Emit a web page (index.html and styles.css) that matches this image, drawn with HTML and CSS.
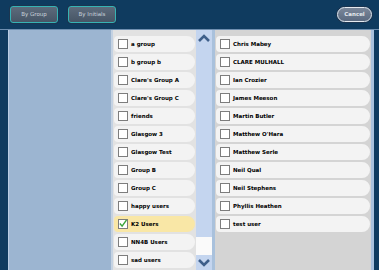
FILE: index.html
```html
<!doctype html>
<html>
<head>
<meta charset="UTF-8">
<title>Groups</title>
<link rel="stylesheet" href="styles.css">
</head>
<body>
  <div class="app">
    <div class="topbar">
      <a class="tab-button" href="#">By Group</a>
      <a class="tab-button" href="#">By Initials</a>
      <a class="cancel-button" href="#">Cancel</a>
    </div>
    <div class="main">
      <div class="side"></div>
      <div class="group-panel">
        <ul class="list">
          <li class="row"><span class="box"></span>a group</li>
          <li class="row"><span class="box"></span>b group b</li>
          <li class="row"><span class="box"></span>Clare's Group A</li>
          <li class="row"><span class="box"></span>Clare's Group C</li>
          <li class="row"><span class="box"></span>friends</li>
          <li class="row"><span class="box"></span>Glasgow 3</li>
          <li class="row"><span class="box"></span>Glasgow Test</li>
          <li class="row"><span class="box"></span>Group B</li>
          <li class="row"><span class="box"></span>Group C</li>
          <li class="row"><span class="box"></span>happy users</li>
          <li class="row selected"><span class="box checked">
            <svg width="9" height="9" viewBox="0 0 9 9"><path d="M1 4.5 L3.5 7.5 L8.5 0.5" fill="none" stroke="#3aa53a" stroke-width="1.6"/></svg>
          </span>K2 Users</li>
          <li class="row"><span class="box"></span>NN4B Users</li>
          <li class="row"><span class="box"></span>sad users</li>
        </ul>
        <div class="scroller">
          <svg class="arrow" width="14" height="9" viewBox="0 0 14 9"><path d="M2 7 L7 2 L12 7" fill="none" stroke="#3e5f8a" stroke-width="2.6"/></svg>
          <div class="track"></div>
          <div class="track-end"></div>
          <svg class="arrow" width="14" height="9" viewBox="0 0 14 9"><path d="M2 2 L7 7 L12 2" fill="none" stroke="#3e5f8a" stroke-width="2.6"/></svg>
        </div>
      </div>
      <div class="user-panel">
        <ul class="list">
          <li class="row"><span class="box"></span>Chris Mabey</li>
          <li class="row"><span class="box"></span>CLARE MULHALL</li>
          <li class="row"><span class="box"></span>Ian Crozier</li>
          <li class="row"><span class="box"></span>James Meeson</li>
          <li class="row"><span class="box"></span>Martin Butler</li>
          <li class="row"><span class="box"></span>Matthew O'Hara</li>
          <li class="row"><span class="box"></span>Matthew Serle</li>
          <li class="row"><span class="box"></span>Neil Qual</li>
          <li class="row"><span class="box"></span>Neil Stephens</li>
          <li class="row"><span class="box"></span>Phyllis Heathen</li>
          <li class="row"><span class="box"></span>test user</li>
        </ul>
      </div>
      <div class="edge"></div>
    </div>
  </div>
</body>
</html>
```

FILE: styles.css
```css
body {
  margin: 0;
  padding: 0;
  background-color: white;
  font-family: "DejaVu Sans", Verdana, sans-serif;
}

.app {
  width: 379px;
  height: 270px;
  display: flex;
  flex-direction: column;
  background-color: #0f3b5f;
  overflow: hidden;
}

.topbar {
  height: 29px;
  display: flex;
  align-items: center;
  padding: 0 7px 0 10px;
  gap: 10px;
  border-bottom: 1px solid #6f8fb0;
}

.tab-button {
  width: 46px;
  height: 15px;
  line-height: 15px;
  text-align: center;
  font-size: 5.5px;
  color: #c9d2dc;
  text-decoration: none;
  background: linear-gradient(#5d6b7b, #465566);
  border: 1px solid #35b3b5;
  border-radius: 3px;
  box-shadow: 0 0 0 1px #1c3550;
}

.cancel-button {
  margin-left: auto;
  width: 33px;
  height: 13px;
  line-height: 13px;
  text-align: center;
  font-size: 5.5px;
  font-weight: bold;
  color: #e4e8ee;
  text-decoration: none;
  background: linear-gradient(#7a879a, #5b6a80);
  border: 1.5px solid #e6eaf0;
  border-radius: 8px;
  box-shadow: 0 0 0 1px #1c3550;
}

.main {
  flex: 1;
  display: flex;
  padding-left: 8px;
}

.side {
  width: 102px;
  background-color: #9cb5d1;
  border-left: 1px solid #b9cde2;
}

.group-panel {
  width: 99px;
  display: flex;
  background-color: #e2e2e2;
  border-left: 2px solid #c4d2e2;
  border-right: 3px solid #a9c1dc;
}

.user-panel {
  flex: 1;
  background-color: #d4d4d4;
  border-right: 3px solid #a9c1dc;
}

.edge {
  width: 5px;
}

.list {
  flex: 1;
  list-style: none;
  margin: 0;
  padding: 6px 1px 0 1px;
  display: flex;
  flex-direction: column;
  gap: 2px;
}

.row {
  height: 16px;
  display: flex;
  align-items: center;
  gap: 3px;
  padding-left: 4px;
  background-color: #f3f3f3;
  border-radius: 4px 8px 8px 4px;
  font-size: 5.5px;
  font-weight: bold;
  color: #000;
  white-space: nowrap;
}

.row.selected {
  background-color: #f9e7a6;
}

.box {
  width: 8px;
  height: 8px;
  flex: none;
  background-color: white;
  border: 1px solid #7d7d7d;
  display: flex;
  align-items: center;
  justify-content: center;
}

.box svg {
  margin-top: -1px;
}

.scroller {
  width: 16px;
  display: flex;
  flex-direction: column;
  align-items: center;
  background-color: #c4d5ef;
  padding: 4px 0 3px;
}

.track {
  flex: 1;
}

.track-end {
  width: 16px;
  height: 18px;
  background-color: #fafafa;
  margin-bottom: 3px;
}

.arrow {
  flex: none;
}
```
